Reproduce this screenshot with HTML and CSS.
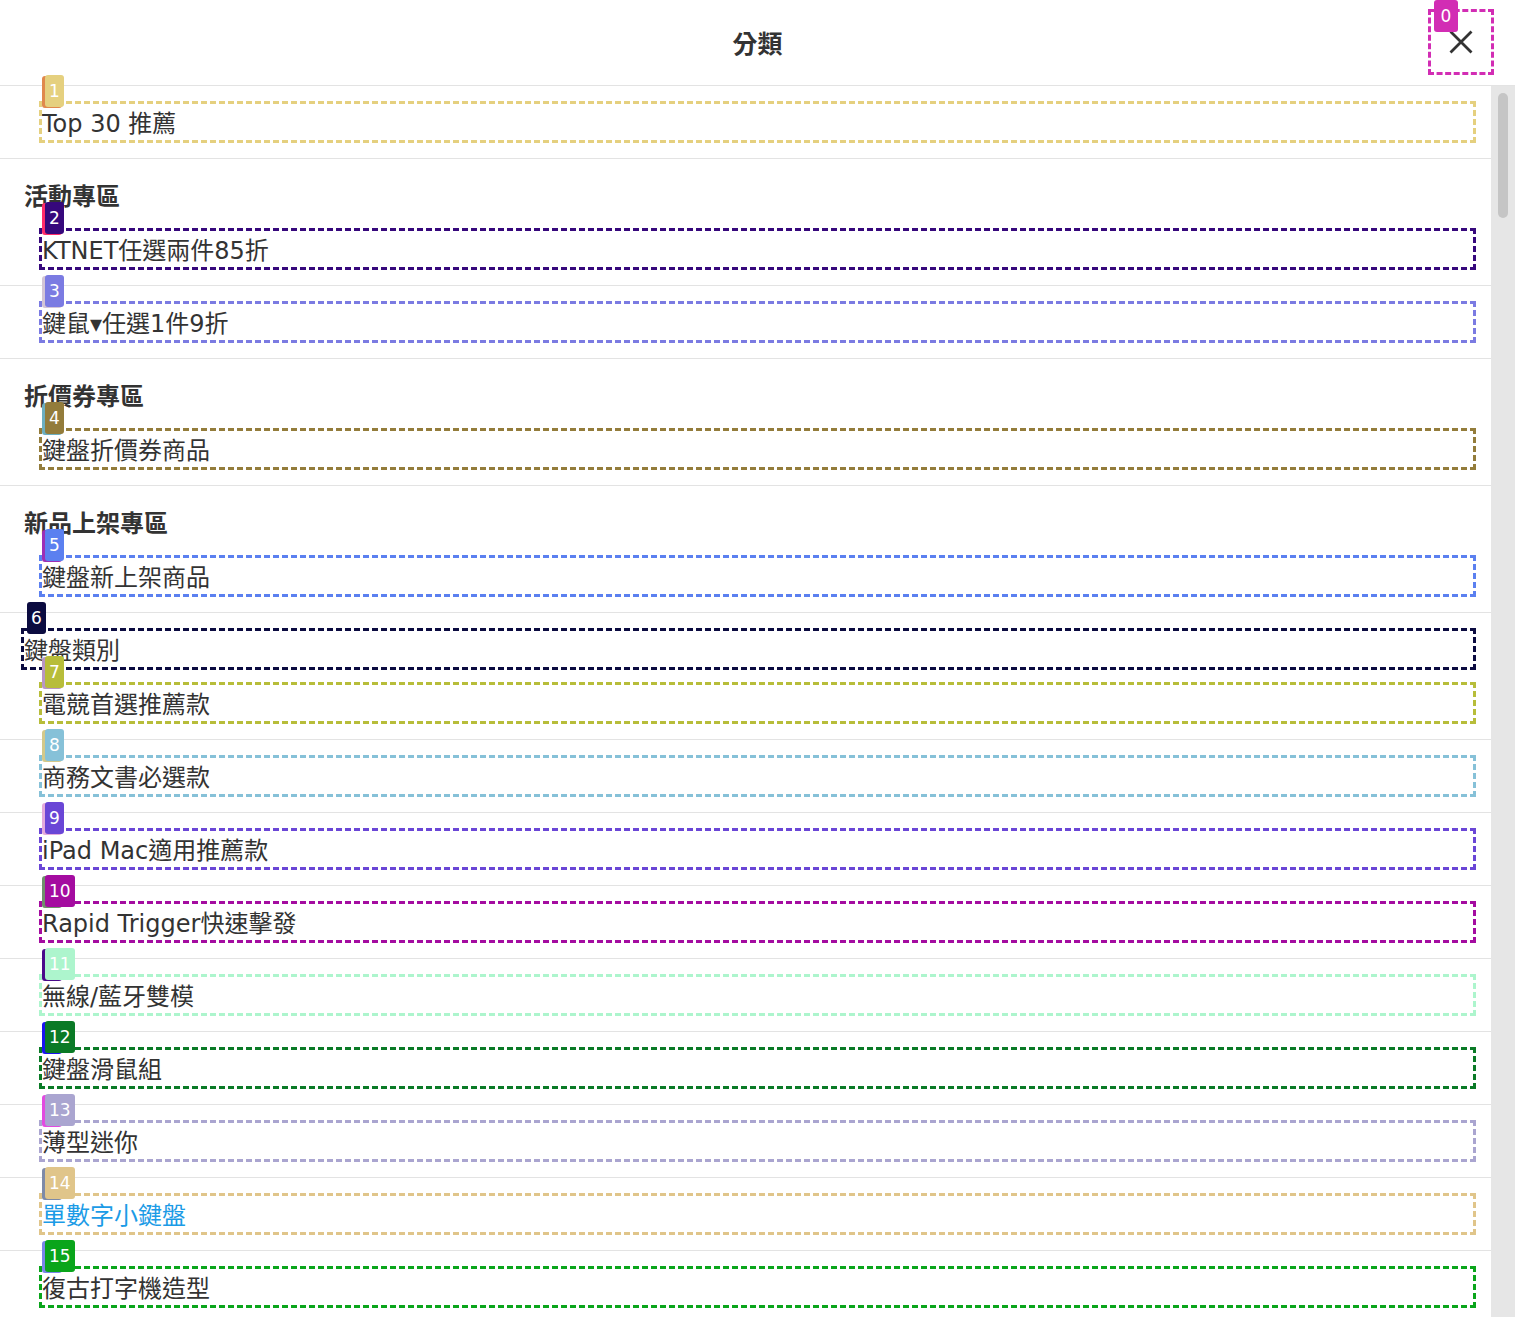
FILE: index.html
```html
<!DOCTYPE html>
<html lang="zh-Hant">
<head>
<meta charset="utf-8">
<title>分類</title>
<link rel="stylesheet" href="styles.css">
</head>
<body>
<div class="app">
  <header class="topbar">
    <h1 class="title">分類</h1>
    <button class="close mk0" type="button" aria-label="關閉">
      <svg class="close-icon" viewBox="0 0 24 24" width="24" height="24" aria-hidden="true">
        <path d="M1.5 1.5 L22.5 22.5 M22.5 1.5 L1.5 22.5" stroke="#333" stroke-width="2.8" fill="none" stroke-linecap="butt"/>
      </svg>
      <span class="tag">0</span>
    </button>
  </header>
  <div class="body">
    <ul class="menu">
      <li class="row">
        <a class="link sub mk1" href="#">Top 30 推薦<span class="strip"></span><span class="tag">1</span></a>
      </li>
      <li class="row">
        <h2 class="section">活動專區</h2>
        <a class="link sub mk2" href="#">KTNET任選兩件85折<span class="strip"></span><span class="tag">2</span></a>
      </li>
      <li class="row">
        <a class="link sub mk3" href="#">鍵鼠▾任選1件9折<span class="strip"></span><span class="tag">3</span></a>
      </li>
      <li class="row">
        <h2 class="section">折價券專區</h2>
        <a class="link sub mk4" href="#">鍵盤折價券商品<span class="strip"></span><span class="tag">4</span></a>
      </li>
      <li class="row">
        <h2 class="section">新品上架專區</h2>
        <a class="link sub mk5" href="#">鍵盤新上架商品<span class="strip"></span><span class="tag">5</span></a>
      </li>
      <li class="row">
        <a class="link mk6" href="#">鍵盤類別<span class="tag">6</span></a>
        <a class="link sub mk7" href="#">電競首選推薦款<span class="strip"></span><span class="tag">7</span></a>
      </li>
      <li class="row">
        <a class="link sub mk8" href="#">商務文書必選款<span class="strip"></span><span class="tag">8</span></a>
      </li>
      <li class="row">
        <a class="link sub mk9" href="#">iPad Mac適用推薦款<span class="strip"></span><span class="tag">9</span></a>
      </li>
      <li class="row">
        <a class="link sub mk10" href="#">Rapid Trigger快速擊發<span class="strip"></span><span class="tag">10</span></a>
      </li>
      <li class="row">
        <a class="link sub mk11" href="#">無線/藍牙雙模<span class="strip"></span><span class="tag">11</span></a>
      </li>
      <li class="row">
        <a class="link sub mk12" href="#">鍵盤滑鼠組<span class="strip"></span><span class="tag">12</span></a>
      </li>
      <li class="row">
        <a class="link sub mk13" href="#">薄型迷你<span class="strip"></span><span class="tag">13</span></a>
      </li>
      <li class="row">
        <a class="link sub active mk14" href="#">單數字小鍵盤<span class="strip"></span><span class="tag">14</span></a>
      </li>
      <li class="row">
        <a class="link sub mk15" href="#">復古打字機造型<span class="strip"></span><span class="tag">15</span></a>
      </li>
    </ul>
    <div class="scrollbar"><div class="thumb"></div></div>
  </div>
</div>
</body>
</html>
```

FILE: styles.css
```css
* { box-sizing: border-box; }

html, body {
  margin: 0;
  padding: 0;
  background: #ffffff;
}

body {
  font-family: "DejaVu Sans", "Noto Sans CJK TC", sans-serif;
  color: #333333;
  height: 1317px;
  overflow: hidden;
}

.app {
  display: flex;
  flex-direction: column;
  height: 1317px;
  overflow: hidden;
}

.topbar {
  position: relative;
  flex: 0 0 86px;
  display: flex;
  align-items: center;
  justify-content: center;
  border-bottom: 1px solid #e3e3e3;
}

.title {
  margin: 0;
  font-family: "Noto Sans CJK TC", sans-serif;
  font-size: 25px;
  font-weight: 700;
  line-height: 36px;
  color: #333333;
  padding-bottom: 1px;
}

.close {
  position: absolute;
  right: 24px;
  top: 12px;
  width: 60px;
  height: 60px;
  padding: 0;
  border: 0;
  background: transparent;
  display: flex;
  align-items: center;
  justify-content: center;
  outline: 3px dashed var(--c);
}

.close .tag {
  top: -12px;
  min-width: 24px;
  text-align: center;
}

.body {
  flex: 1 1 auto;
  display: flex;
  min-height: 0;
}

.menu {
  flex: 1 1 auto;
  list-style: none;
  margin: 0;
  padding: 0;
}

.row {
  display: flex;
  flex-direction: column;
  gap: 18px;
  padding: 18px 18px 18px 24px;
  border-bottom: 1px solid #e3e3e3;
}

.section {
  margin: 0;
  font-family: "Noto Sans CJK TC", sans-serif;
  font-size: 24px;
  font-weight: 700;
  line-height: 36px;
  color: #333333;
}

.link {
  position: relative;
  display: block;
  height: 36px;
  padding-top: 4px;
  font-size: 24px;
  line-height: 32px;
  color: #333333;
  text-decoration: none;
  white-space: nowrap;
  outline: 3px dashed var(--c);
}

.link.sub {
  margin-left: 18px;
}

.link.active {
  color: #1b9be6;
}

.tag {
  position: absolute;
  left: 3px;
  top: -29px;
  z-index: 3;
  height: 32px;
  padding: 0 4px;
  border-radius: 3px;
  background: var(--c);
  color: #ffffff;
  font-family: "DejaVu Sans", sans-serif;
  font-size: 17px;
  line-height: 33px;
  font-weight: 400;
}

.strip {
  position: absolute;
  left: 0;
  top: -28px;
  z-index: 2;
  width: 20px;
  height: 32px;
  border-radius: 3px;
  background: var(--s);
}

.scrollbar {
  flex: 0 0 24px;
  background: #e6e6e6;
  padding: 7px 7px 0 7px;
}

.thumb {
  width: 10px;
  height: 125px;
  border-radius: 5px;
  background: #c5c5c5;
}

.mk0  { --c: #d22db4; }
.mk1  { --c: #e5d07f; --s: #e0884c; }
.mk2  { --c: #36087c; --s: #ff2b6a; }
.mk3  { --c: #7b7be2; --s: #d3c5d6; }
.mk4  { --c: #937c3b; --s: #6cafc0; }
.mk5  { --c: #5b80f0; --s: #9c2fb6; }
.mk6  { --c: #0b0b40; }
.mk7  { --c: #b7bd3a; --s: #b996c4; }
.mk8  { --c: #86c1d8; --s: #d3c98a; }
.mk9  { --c: #6a46d6; --s: #e4aadc; }
.mk10 { --c: #a40ca0; --s: #6f8f6b; }
.mk11 { --c: #adf5cd; --s: #4a0a8a; }
.mk12 { --c: #0a7a26; --s: #1a12f0; }
.mk13 { --c: #aaa5d0; --s: #e24be0; }
.mk14 { --c: #e0c58a; --s: #7d8aa8; }
.mk15 { --c: #0aa51b; --s: #7a85e8; }
```
